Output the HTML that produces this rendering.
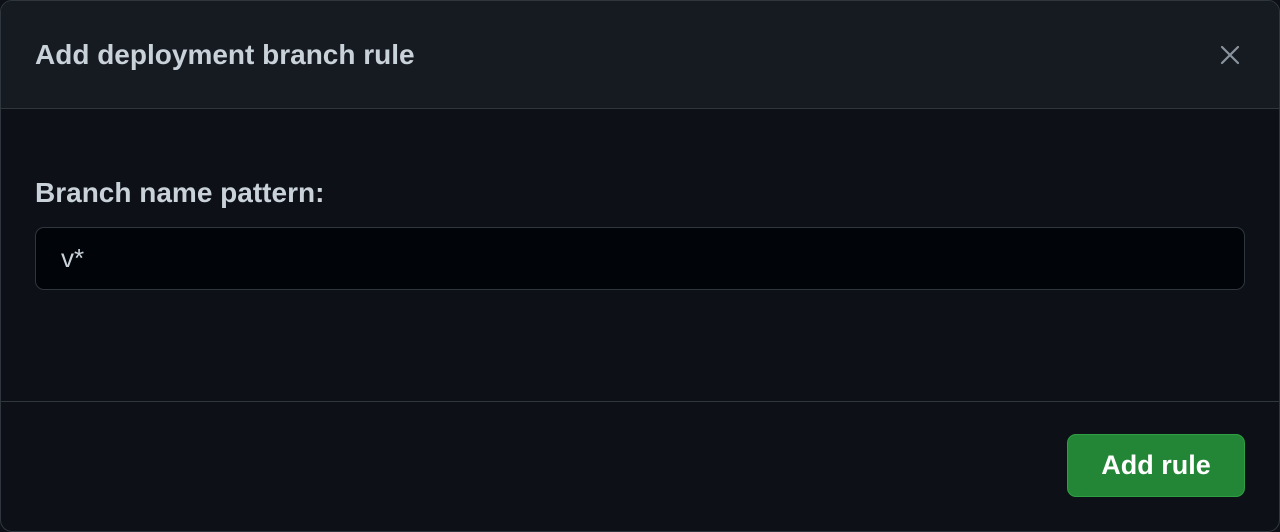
<!DOCTYPE html>
<html><head><style>
html,body{margin:0;padding:0;background:#0d1117;width:1280px;height:532px;overflow:hidden;font-family:"Liberation Sans",sans-serif}
.d{position:absolute;left:0;top:0;width:1278px;height:530px;border:1px solid #30363d;border-radius:12px;background:#0d1117;overflow:hidden}
.h{position:absolute;left:0;top:0;width:1278px;height:107px;background:#161b22;border-bottom:1px solid #30363d}
.t{position:absolute;left:34px;top:38px;font-size:28px;font-weight:bold;color:#c9d1d9}
.x{position:absolute;left:1218px;top:43px}
.l{position:absolute;left:34px;top:176px;font-size:28px;font-weight:bold;color:#c9d1d9}
.i{position:absolute;left:34px;top:226px;width:1208px;height:61px;border:1px solid #30363d;border-radius:9px;background:#010409}
.v{position:absolute;left:25px;top:15px;font-size:26px;color:#c9d1d9}
.f{position:absolute;left:0;top:400px;width:1278px;border-top:1px solid #30363d}
.b{position:absolute;left:1066px;top:433px;width:176px;height:61px;border:1px solid #2ea043;border-radius:9px;background:#238636;color:#fff;font-size:27px;font-weight:bold;text-align:center;line-height:61px}
</style></head><body>
<div class="d">
<div class="h"><div class="t">Add deployment branch rule</div>
<svg class="x" width="22" height="22" viewBox="0 0 22 22"><path d="M3 3L19 19M19 3L3 19" stroke="#8b949e" stroke-width="2.2" stroke-linecap="round"/></svg></div>
<div class="l">Branch name pattern:</div>
<div class="i"><div class="v">v*</div></div>
<div class="f"></div>
<div class="b">Add rule</div>
</div>
</body></html>
